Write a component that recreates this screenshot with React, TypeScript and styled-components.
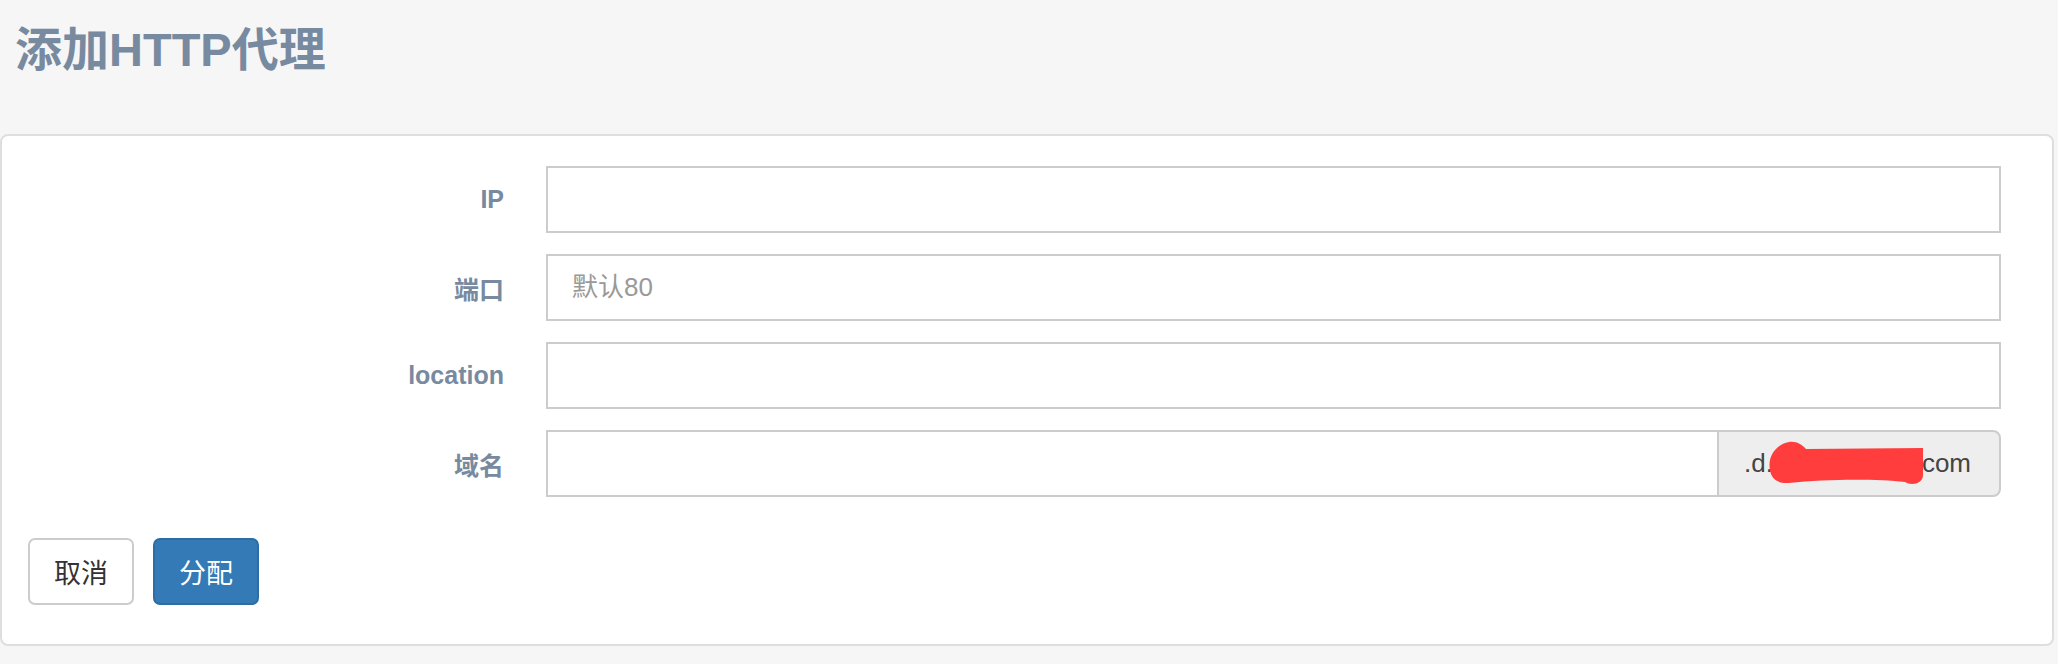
import React from "react";
import styled, { createGlobalStyle } from "styled-components";

const Global = createGlobalStyle`
  html, body { margin: 0; padding: 0; background: #f6f6f6; }
  body { font-family: "Liberation Sans", "Noto Sans CJK SC", sans-serif; }
  * { box-sizing: border-box; }
`;

const Page = styled.div`
  width: 2058px;
  min-height: 664px;
  background: #f6f6f6;
  display: flex;
  flex-direction: column;
`;

const Header = styled.div`
  height: 134px;
  padding: 23px 15px 0;
`;

const Title = styled.h3`
  margin: 0;
  font-family: "Liberation Sans", "Noto Sans CJK SC", sans-serif;
  font-weight: 700;
  font-size: 47px;
  line-height: 53px;
  color: #778a9f;
`;

const Card = styled.div`
  width: 2054px;
  background: #fff;
  border: 2px solid #dedede;
  border-radius: 8px;
  padding: 30px 51px 39px 0;
  display: flex;
  flex-direction: column;
  gap: 41px;
`;

const Form = styled.div`
  display: grid;
  grid-template-columns: 502px 1fr;
  column-gap: 42px;
  row-gap: 21px;
  align-items: center;
`;

const Label = styled.label`
  text-align: right;
  font-weight: 700;
  font-size: 25px;
  color: #778a9f;
`;

const Input = styled.input`
  display: block;
  width: 100%;
  height: 67px;
  border: 2px solid #cccccc;
  border-radius: 0;
  padding: 0 24px;
  font-family: "Liberation Sans", "Noto Sans CJK SC", sans-serif;
  font-size: 26px;
  color: #555;
  background: #fff;
  outline: none;
  &::placeholder { color: #999; }
`;

const Group = styled.div`
  display: flex;
  height: 67px;
`;

const GroupInput = styled(Input)`
  flex: 1;
  height: 67px;
  border-right: none;
`;

const Addon = styled.span`
  position: relative;
  display: flex;
  align-items: center;
  width: 284px;
  height: 67px;
  padding: 0 28px 0 25px;
  background: #eeeeee;
  border: 2px solid #cccccc;
  border-radius: 0 8px 8px 0;
  font-size: 26px;
  color: #444;
  white-space: nowrap;
`;

const Hidden = styled.span`
  display: inline-block;
  width: 152px;
`;

const Scribble = styled.svg`
  position: absolute;
  left: -2px;
  top: -2px;
  width: 284px;
  height: 67px;
  pointer-events: none;
`;

const Actions = styled.div`
  display: flex;
  gap: 19px;
  padding-left: 26px;
`;

const Button = styled.button<{ $primary?: boolean }>`
  height: 67px;
  padding: 0 24px;
  border-radius: 7px;
  border: 2px solid ${(p) => (p.$primary ? "#2e6da4" : "#cccccc")};
  background: ${(p) => (p.$primary ? "#337ab7" : "#ffffff")};
  color: ${(p) => (p.$primary ? "#ffffff" : "#333333")};
  font-family: "Liberation Sans", "Noto Sans CJK SC", sans-serif;
  font-size: 27px;
  cursor: pointer;
`;

export default function App() {
  return (
    <Page>
      <Global />
      <Header>
        <Title>添加HTTP代理</Title>
      </Header>
      <Card>
        <Form>
          <Label>IP</Label>
          <Input />
          <Label>端口</Label>
          <Input placeholder="默认80" />
          <Label>location</Label>
          <Input />
          <Label>域名</Label>
          <Group>
            <GroupInput />
            <Addon>
              .d.<Hidden />com
              <Scribble viewBox="0 0 284 67">
                <path
                  d="M 53 40 C 50 26, 60 14, 72 12 C 80 11, 85 15, 89 19 L 206 18 L 206 45 C 206 54, 194 56, 188 52 C 160 49, 110 49, 72 53 C 60 54, 54 48, 53 40 Z"
                  fill="#ff3d3d"
                />
              </Scribble>
            </Addon>
          </Group>
        </Form>
        <Actions>
          <Button>取消</Button>
          <Button $primary>分配</Button>
        </Actions>
      </Card>
    </Page>
  );
}
